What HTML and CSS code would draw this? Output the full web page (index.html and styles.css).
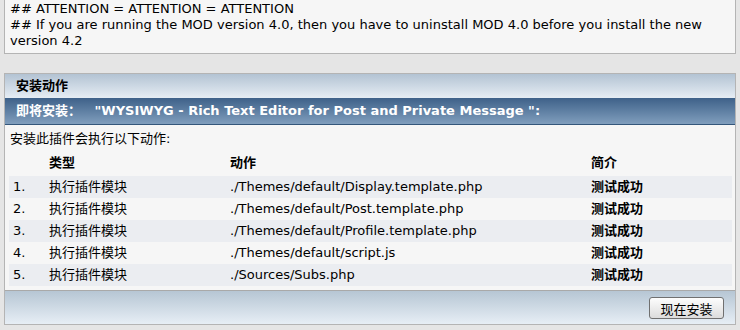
FILE: index.html
```html
<!DOCTYPE html>
<html lang="zh-CN">
<head>
  <meta charset="UTF-8">
  <title>安装动作</title>
  <link rel="stylesheet" href="styles.css">
</head>
<body>
  <div class="notice">
    ## ATTENTION = ATTENTION = ATTENTION<br>
    ## If you are running the MOD version 4.0, then you have to uninstall MOD 4.0 before you install the new version 4.2
  </div>

  <div class="panel">
    <div class="cat-bar">安装动作</div>
    <div class="title-bar">即将安装：&nbsp;&nbsp; "WYSIWYG - Rich Text Editor for Post and Private Message ":</div>
    <div class="panel-body">
      <p class="intro">安装此插件会执行以下动作:</p>
      <table class="actions">
        <thead>
          <tr>
            <th class="col-num"></th>
            <th class="col-type">类型</th>
            <th class="col-action">动作</th>
            <th class="col-desc">简介</th>
          </tr>
        </thead>
        <tbody>
          <tr class="alt">
            <td>1.</td>
            <td>执行插件模块</td>
            <td>./Themes/default/Display.template.php</td>
            <td class="ok">测试成功</td>
          </tr>
          <tr>
            <td>2.</td>
            <td>执行插件模块</td>
            <td>./Themes/default/Post.template.php</td>
            <td class="ok">测试成功</td>
          </tr>
          <tr class="alt">
            <td>3.</td>
            <td>执行插件模块</td>
            <td>./Themes/default/Profile.template.php</td>
            <td class="ok">测试成功</td>
          </tr>
          <tr>
            <td>4.</td>
            <td>执行插件模块</td>
            <td>./Themes/default/script.js</td>
            <td class="ok">测试成功</td>
          </tr>
          <tr class="alt">
            <td>5.</td>
            <td>执行插件模块</td>
            <td>./Sources/Subs.php</td>
            <td class="ok">测试成功</td>
          </tr>
        </tbody>
      </table>
    </div>
    <div class="foot-bar">
      <button type="button" class="install-btn">现在安装</button>
    </div>
  </div>
</body>
</html>
```

FILE: styles.css
```css
:root {
  --page: #e5e5e5;
  --box: #f6f6f6;
  --border: #b4b4b4;
  --row-alt: #ebedf1;
  --text: #000;
}

body {
  margin: 0 4px;
  background: var(--page);
  color: var(--text);
  font-family: "DejaVu Sans", Verdana, "Noto Sans CJK SC", sans-serif;
  font-size: 13px;
  line-height: 16px;
}

.notice {
  background: var(--box);
  border: 1px solid var(--border);
  border-top: 0;
  padding: 1px 8px 4px 5px;
}

.panel {
  margin-top: 19px;
  background: var(--box);
  border: 1px solid var(--border);
}

.cat-bar {
  height: 24px;
  line-height: 24px;
  padding-left: 11px;
  font-weight: bold;
  background: linear-gradient(#b3c3d3, #e6edf4);
}

.title-bar {
  height: 26px;
  line-height: 26px;
  padding-left: 11px;
  color: #fff;
  font-weight: bold;
  background: linear-gradient(#3e6189, #809ebd);
  border-bottom: 1px solid #34567a;
}

.panel-body {
  padding: 6px 3px 4px 4px;
}

.intro {
  margin: 0 0 7px 1px;
}

.actions {
  width: 100%;
  border-collapse: collapse;
}

.actions tr {
  height: 22px;
}

.actions th,
.actions td {
  padding: 0 4px;
  text-align: left;
  vertical-align: middle;
}

.actions th {
  font-weight: bold;
  vertical-align: top;
  padding-top: 1px;
}

.col-num { width: 28px; }
.col-type { width: 173px; }
.col-action { width: 353px; }

.actions tr.alt td {
  background: var(--row-alt);
}

.actions td.ok {
  font-weight: bold;
}

.foot-bar {
  border-top: 1px solid #a9a9a9;
  padding: 6px 11px 5px;
  text-align: right;
  background: linear-gradient(#b6c6d4, #e7eef5);
}

.install-btn {
  display: inline-block;
  vertical-align: top;
  width: 75px;
  height: 22px;
  padding: 0;
  font-family: inherit;
  font-size: 13px;
  color: #000;
  background: linear-gradient(#fdfdfd, #dcdcdc);
  border: 1px solid #707070;
  border-radius: 3px;
  cursor: pointer;
}
```
